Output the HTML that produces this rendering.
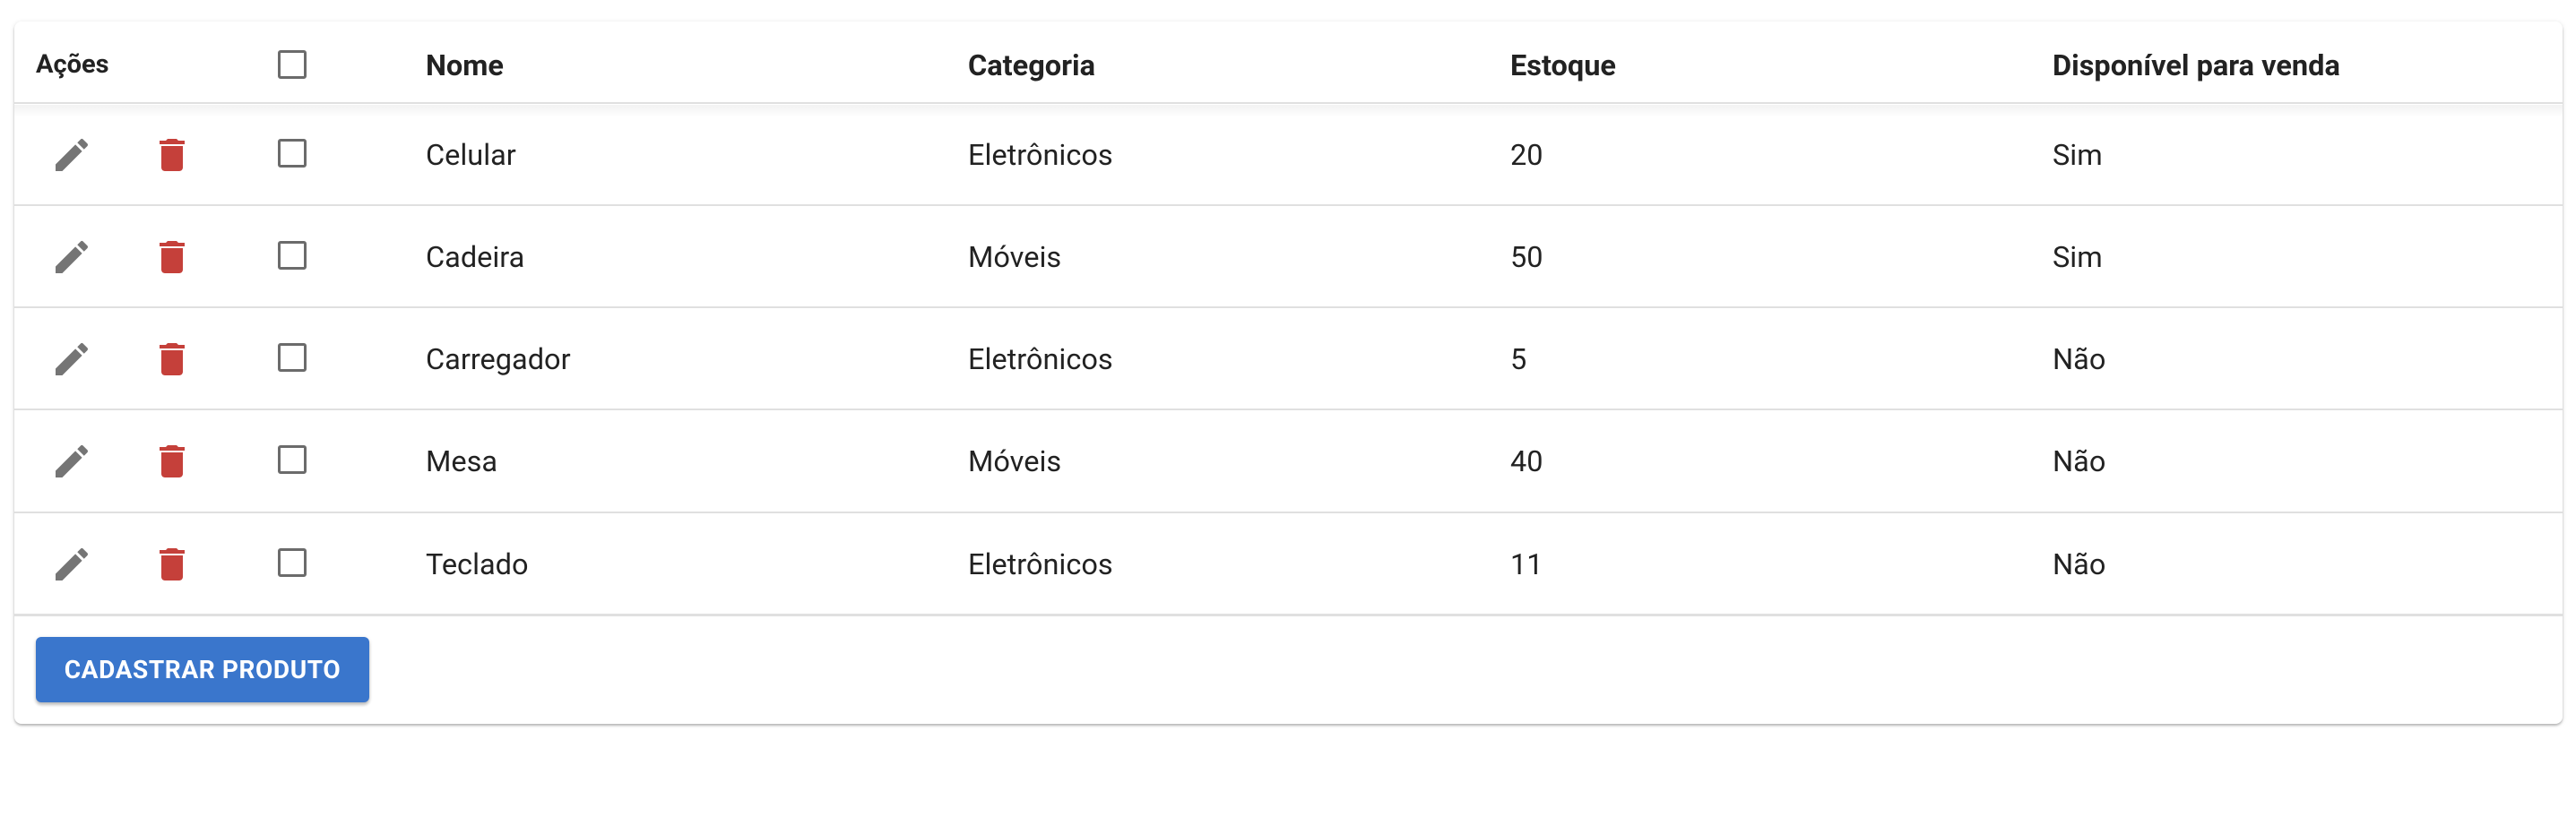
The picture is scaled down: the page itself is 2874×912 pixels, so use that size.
<!DOCTYPE html>
<html><head><meta charset="utf-8"><style>
html,body{margin:0;padding:0;background:#fff;width:2874px;height:912px;overflow:hidden;font-family:"Roboto","Liberation Sans",sans-serif;color:#222}
.card{position:absolute;left:16px;top:24px;width:2843px;height:784px;background:#fff;border-radius:8px;box-shadow:0 2px 2px rgba(0,0,0,.22),0 1px 6px rgba(0,0,0,.12)}
.line{position:absolute;left:16px;width:2843px;height:2px;background:#e0e0e0}
.hshadow{position:absolute;left:16px;width:2843px;top:117px;height:14px;background:linear-gradient(rgba(0,0,0,.05),rgba(0,0,0,0))}
.t{position:absolute;font-size:32.5px;line-height:40px;white-space:nowrap}
.h{font-weight:bold;font-size:32.5px}
.cb{position:absolute;left:310px;width:26px;height:26px;border:3.5px solid #6b6b6b;border-radius:3px}
svg{position:absolute}
.btn{position:absolute;left:40px;top:711px;width:372px;height:73px;background:#3a76cc;border-radius:6px;box-shadow:0 3px 3px rgba(0,0,0,.2),0 1px 5px rgba(0,0,0,.12);color:#fff;font-weight:bold;font-size:28px;letter-spacing:.6px;text-align:center;line-height:73px}
</style></head><body>
<div class="card"></div>
<div class="t h" style="left:40px;top:52px;font-size:29px">Ações</div>
<div class="cb" style="top:56px"></div>
<div class="t h" style="left:475px;top:53px">Nome</div>
<div class="t h" style="left:1080px;top:53px">Categoria</div>
<div class="t h" style="left:1685px;top:53px">Estoque</div>
<div class="t h" style="left:2290px;top:53px">Disponível para venda</div>
<div class="line" style="top:114px"></div>
<div class="hshadow"></div>

<div class="line" style="top:228px"></div>
<div class="line" style="top:342px"></div>
<div class="line" style="top:456px"></div>
<div class="line" style="top:571px"></div>
<div class="line" style="top:685px;height:3px"></div>

<svg style="left:56px;top:149px" width="48" height="48" viewBox="0 0 24 24"><path fill="#757575" d="M3 17.25V21h3.75L17.81 9.94l-3.75-3.75L3 17.25zM20.71 7.04c.39-.39.39-1.020 0-1.41l-2.34-2.34a.996.996 0 0 0-1.41 0l-1.83 1.83 3.75 3.75 1.83-1.83z"/></svg>
<svg style="left:168px;top:149px" width="48" height="48" viewBox="0 0 24 24"><path fill="#c5403a" d="M6 19c0 1.1.9 2 2 2h8c1.1 0 2-.9 2-2V7H6v12zM19 4h-3.5l-1-1h-5l-1 1H5v2h14V4z"/></svg>
<div class="cb" style="top:155px"></div>
<div class="t" style="left:475px;top:153px">Celular</div>
<div class="t" style="left:1080px;top:153px">Eletrônicos</div>
<div class="t" style="left:1685px;top:153px">20</div>
<div class="t" style="left:2290px;top:153px">Sim</div>

<svg style="left:56px;top:263px" width="48" height="48" viewBox="0 0 24 24"><path fill="#757575" d="M3 17.25V21h3.75L17.81 9.94l-3.75-3.75L3 17.25zM20.71 7.04c.39-.39.39-1.02 0-1.41l-2.34-2.34a.996.996 0 0 0-1.41 0l-1.83 1.83 3.75 3.75 1.83-1.83z"/></svg>
<svg style="left:168px;top:263px" width="48" height="48" viewBox="0 0 24 24"><path fill="#c5403a" d="M6 19c0 1.1.9 2 2 2h8c1.1 0 2-.9 2-2V7H6v12zM19 4h-3.5l-1-1h-5l-1 1H5v2h14V4z"/></svg>
<div class="cb" style="top:269px"></div>
<div class="t" style="left:475px;top:267px">Cadeira</div>
<div class="t" style="left:1080px;top:267px">Móveis</div>
<div class="t" style="left:1685px;top:267px">50</div>
<div class="t" style="left:2290px;top:267px">Sim</div>

<svg style="left:56px;top:377px" width="48" height="48" viewBox="0 0 24 24"><path fill="#757575" d="M3 17.25V21h3.75L17.81 9.94l-3.75-3.75L3 17.25zM20.71 7.04c.39-.39.39-1.02 0-1.41l-2.34-2.34a.996.996 0 0 0-1.41 0l-1.83 1.83 3.75 3.75 1.83-1.83z"/></svg>
<svg style="left:168px;top:377px" width="48" height="48" viewBox="0 0 24 24"><path fill="#c5403a" d="M6 19c0 1.1.9 2 2 2h8c1.1 0 2-.9 2-2V7H6v12zM19 4h-3.5l-1-1h-5l-1 1H5v2h14V4z"/></svg>
<div class="cb" style="top:383px"></div>
<div class="t" style="left:475px;top:381px">Carregador</div>
<div class="t" style="left:1080px;top:381px">Eletrônicos</div>
<div class="t" style="left:1685px;top:381px">5</div>
<div class="t" style="left:2290px;top:381px">Não</div>

<svg style="left:56px;top:491px" width="48" height="48" viewBox="0 0 24 24"><path fill="#757575" d="M3 17.25V21h3.75L17.81 9.94l-3.75-3.75L3 17.25zM20.71 7.04c.39-.39.39-1.02 0-1.41l-2.34-2.34a.996.996 0 0 0-1.41 0l-1.83 1.83 3.75 3.75 1.83-1.83z"/></svg>
<svg style="left:168px;top:491px" width="48" height="48" viewBox="0 0 24 24"><path fill="#c5403a" d="M6 19c0 1.1.9 2 2 2h8c1.1 0 2-.9 2-2V7H6v12zM19 4h-3.5l-1-1h-5l-1 1H5v2h14V4z"/></svg>
<div class="cb" style="top:497px"></div>
<div class="t" style="left:475px;top:495px">Mesa</div>
<div class="t" style="left:1080px;top:495px">Móveis</div>
<div class="t" style="left:1685px;top:495px">40</div>
<div class="t" style="left:2290px;top:495px">Não</div>

<svg style="left:56px;top:606px" width="48" height="48" viewBox="0 0 24 24"><path fill="#757575" d="M3 17.25V21h3.75L17.81 9.94l-3.75-3.75L3 17.25zM20.71 7.04c.39-.39.39-1.02 0-1.41l-2.34-2.34a.996.996 0 0 0-1.41 0l-1.83 1.83 3.75 3.75 1.83-1.83z"/></svg>
<svg style="left:168px;top:606px" width="48" height="48" viewBox="0 0 24 24"><path fill="#c5403a" d="M6 19c0 1.1.9 2 2 2h8c1.1 0 2-.9 2-2V7H6v12zM19 4h-3.5l-1-1h-5l-1 1H5v2h14V4z"/></svg>
<div class="cb" style="top:612px"></div>
<div class="t" style="left:475px;top:610px">Teclado</div>
<div class="t" style="left:1080px;top:610px">Eletrônicos</div>
<div class="t" style="left:1685px;top:610px">11</div>
<div class="t" style="left:2290px;top:610px">Não</div>

<div class="btn">CADASTRAR PRODUTO</div>
</body></html>
